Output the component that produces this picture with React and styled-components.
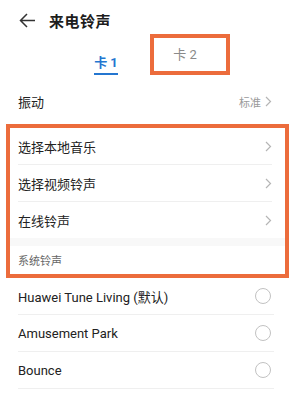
import React from "react";
import styled, { createGlobalStyle } from "styled-components";

const GlobalStyle = createGlobalStyle`
  body {
    margin: 0;
    background: #fff;
    font-family: Roboto, "Noto Sans CJK SC", sans-serif;
    color: #222;
  }
`;

const Page = styled.div`
  width: 292px;
  height: 399px;
  overflow: hidden;
  background: #fff;
`;

const Header = styled.div`
  display: flex;
  align-items: center;
  height: 40px;
  padding-left: 19px;
  gap: 13px;
`;

const Title = styled.div`
  font-size: 15px;
  font-weight: 700;
  color: #1d1d1d;
  letter-spacing: 0.5px;
`;

const Tabs = styled.div`
  display: flex;
  align-items: stretch;
  height: 41px;
  margin-top: -6px;
  padding-left: 66px;
  gap: 4px;
`;

const Tab = styled.div`
  width: ${(p) => (p.$highlight ? "62px" : "80px")};
  display: flex;
  flex-direction: column;
  align-items: center;
  justify-content: center;
  border: ${(p) => (p.$highlight ? "4px solid #ec6c3c" : "none")};
  padding-right: ${(p) => (p.$highlight ? "10px" : "0")};
  box-sizing: content-box;
  height: ${(p) => (p.$highlight ? "33px" : "41px")};
  font-size: 13px;
  color: ${(p) => (p.$active ? "#2476d0" : "#8a8a8a")};
  font-weight: ${(p) => (p.$active ? 700 : 400)};
`;

const TabLabel = styled.span`
  padding-top: ${(p) => (p.$active ? "18px" : "0")};
  padding-bottom: 2px;
  border-bottom: ${(p) => (p.$active ? "2px solid #2476d0" : "none")};
`;

const Row = styled.div`
  display: flex;
  align-items: center;
  justify-content: space-between;
  height: ${(p) => p.$h || 36}px;
  font-size: 13px;
  color: #222;
  border-bottom: ${(p) => (p.$divider ? "1px solid #efefef" : "none")};
`;

const Plain = styled.div`
  padding: 4px 20px 0 18px;
`;

const Right = styled.div`
  display: flex;
  align-items: center;
  gap: 4px;
  font-size: 11px;
  color: #9a9a9a;
`;

const Chevron = () => (
  <svg width="7" height="11" viewBox="0 0 7 11">
    <path d="M1 1 L5.5 5.5 L1 10" fill="none" stroke="#b5b5b5" strokeWidth="1.2" />
  </svg>
);

const Highlight = styled.div`
  margin: 0 3px 0 6px;
  border: 4px solid #ec6c3c;
`;

const Items = styled.div`
  padding: 0 13px 0 8px;
`;

const Band = styled.div`
  height: 8px;
  background: #f8f8f8;
`;

const SectionTitle = styled.div`
  height: 28px;
  display: flex;
  align-items: center;
  padding-left: 8px;
  font-size: 11px;
  color: #666;
`;

const List = styled.div`
  padding: 0 18px;
`;

const Radio = styled.span`
  width: 14px;
  height: 14px;
  border: 1px solid #c2c2c2;
  border-radius: 50%;
  margin-right: 3px;
`;

const tones = ["Huawei Tune Living (默认)", "Amusement Park", "Bounce", ""];

export default function App() {
  return (
    <Page>
      <GlobalStyle />
      <Header>
        <svg width="17" height="15" viewBox="0 0 17 15">
          <path
            d="M16 7.5 H1.5 M8 1 L1.5 7.5 L8 14"
            fill="none"
            stroke="#333"
            strokeWidth="1.5"
          />
        </svg>
        <Title>来电铃声</Title>
      </Header>
      <Tabs>
        <Tab $active>
          <TabLabel $active>卡 1</TabLabel>
        </Tab>
        <Tab $highlight>
          <TabLabel>卡 2</TabLabel>
        </Tab>
      </Tabs>
      <Plain>
        <Row $h={45}>
          <span>振动</span>
          <Right>
            标准 <Chevron />
          </Right>
        </Row>
      </Plain>
      <Highlight>
        <Items>
          <Row $divider>
            <span>选择本地音乐</span>
            <Chevron />
          </Row>
          <Row $divider>
            <span>选择视频铃声</span>
            <Chevron />
          </Row>
          <Row>
            <span>在线铃声</span>
            <Chevron />
          </Row>
        </Items>
        <Band />
        <SectionTitle>系统铃声</SectionTitle>
      </Highlight>
      <List>
        {tones.map((t, i) => (
          <Row key={i} $divider>
            <span>{t}</span>
            <Radio />
          </Row>
        ))}
      </List>
    </Page>
  );
}
